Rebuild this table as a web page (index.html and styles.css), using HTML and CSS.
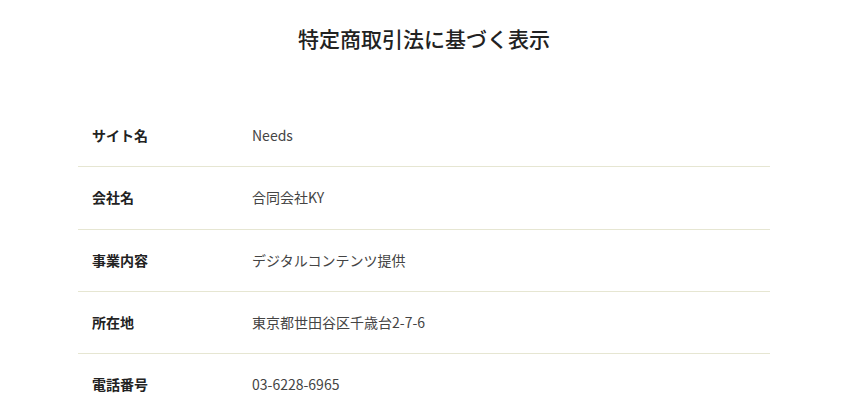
FILE: index.html
```html
<!DOCTYPE html>
<html lang="ja">
<head>
    <meta charset="UTF-8">
    <meta name="viewport" content="width=device-width, initial-scale=1.0">
    <title>特定商取引法に基づく表示</title>
    <link rel="stylesheet" href="styles.css">
</head>
<body>
    <div id="container">
        <h1 class="page-title">特定商取引法に基づく表示</h1>
        <table class="law-table">
            <tr>
                <th>サイト名</th>
                <td>Needs</td>
            </tr>
            <tr>
                <th>会社名</th>
                <td>合同会社KY</td>
            </tr>
            <tr>
                <th>事業内容</th>
                <td>デジタルコンテンツ提供</td>
            </tr>
            <tr>
                <th>所在地</th>
                <td>東京都世田谷区千歳台2-7-6</td>
            </tr>
            <tr>
                <th>電話番号</th>
                <td>03-6228-6965</td>
            </tr>
        </table>
    </div>
</body>
</html>
```

FILE: styles.css
```css
body {
    font-family: "Noto Sans CJK JP", "Noto Sans", sans-serif;
    background-color: #ffffff;
    color: #333;
    margin: 0 8px 0 0;
}
#container {
    width: 692px;
    margin: 0 auto;
}
.page-title {
    font-size: 21px;
    font-weight: 500;
    text-align: center;
    color: #222;
    margin: 0;
    padding: 22px 0 0;
    line-height: 32px;
    height: 83px;
}
.law-table {
    width: 100%;
    border-collapse: collapse;
    font-size: 14px;
}
.law-table tr {
    border-bottom: 1px solid #e6e6d2;
}
.law-table th,
.law-table td {
    height: 61.3px;
    padding: 0;
    text-align: left;
    vertical-align: middle;
    line-height: 21px;
}
.law-table th {
    width: 160px;
    padding-left: 14px;
    font-weight: bold;
    color: #222;
}
.law-table td {
    color: #444;
}
```
